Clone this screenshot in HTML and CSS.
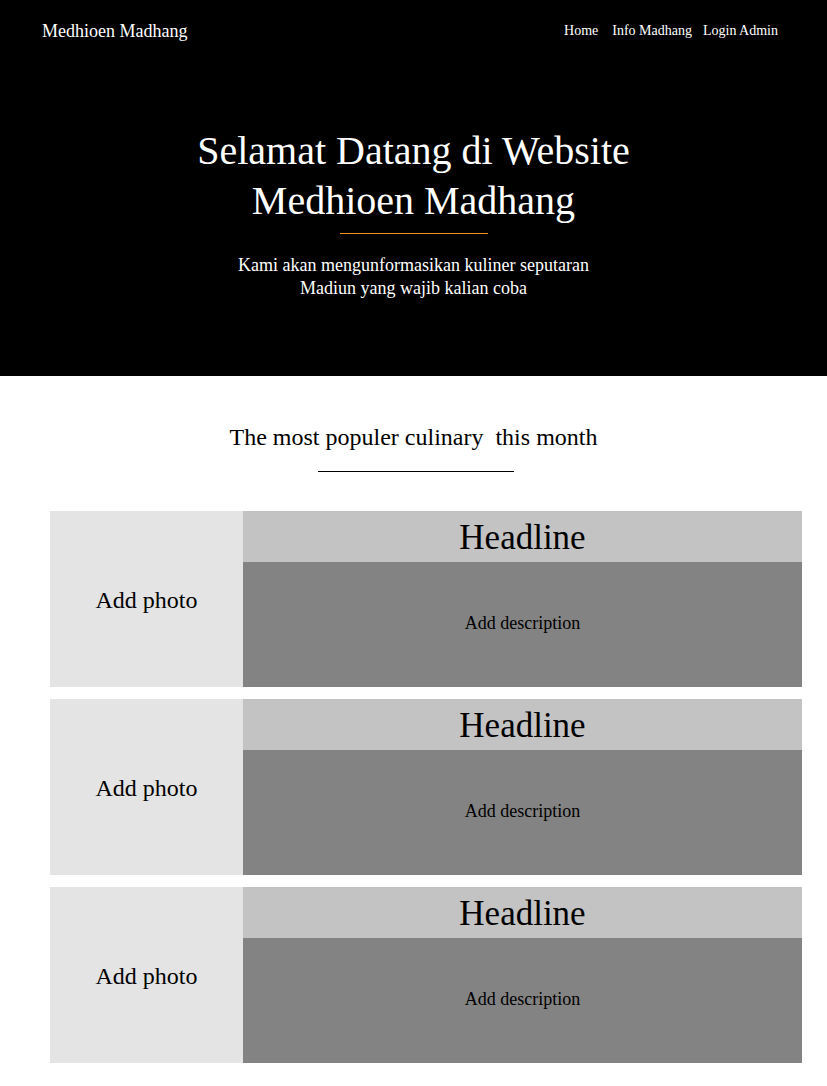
FILE: index.html
```html
<!DOCTYPE html>
<html lang="id">
<head>
  <meta charset="UTF-8">
  <meta name="viewport" content="width=device-width, initial-scale=1.0">
  <title>Medhioen Madhang</title>
  <link rel="stylesheet" href="styles.css">
</head>
<body>
  <header class="hero">
    <nav class="navbar">
      <a class="brand" href="/">Medhioen Madhang</a>
      <ul class="nav-links">
        <li class="nav-home"><a href="/">Home</a></li>
        <li><a href="/info">Info Madhang</a></li>
        <li><a href="/admin">Login Admin</a></li>
      </ul>
    </nav>

    <div class="hero-text">
      <h1>Selamat Datang di Website Medhioen Madhang</h1>
      <hr class="hero-line">
      <p>Kami akan mengunformasikan kuliner seputaran Madiun yang wajib kalian coba</p>
    </div>
  </header>

  <main>
    <h2 class="section-title">The most populer culinary &nbsp;this month</h2>
    <hr class="section-line">

    <div class="cards">
      <div class="card">
        <div class="card-photo">Add photo</div>
        <div class="card-body">
          <h3 class="card-headline">Headline</h3>
          <div class="card-desc">Add description</div>
        </div>
      </div>

      <div class="card">
        <div class="card-photo">Add photo</div>
        <div class="card-body">
          <h3 class="card-headline">Headline</h3>
          <div class="card-desc">Add description</div>
        </div>
      </div>

      <div class="card">
        <div class="card-photo">Add photo</div>
        <div class="card-body">
          <h3 class="card-headline">Headline</h3>
          <div class="card-desc">Add description</div>
        </div>
      </div>
    </div>
  </main>
</body>
</html>
```

FILE: styles.css
```css
body {
  font-family: "Liberation Serif", "Times New Roman", serif;
  margin: 0;
  padding: 0;
  color: #000;
  background-color: #fff;
}

/* header + hero */
.hero {
  background-color: #000;
  color: #fff;
  height: 376px;
}

.navbar {
  display: flex;
  justify-content: space-between;
  align-items: center;
  height: 62px;
  padding: 0 49px 0 42px;
}

.brand {
  color: #fff;
  text-decoration: none;
  font-size: 18px;
}

.nav-links {
  list-style-type: none;
  display: flex;
  gap: 11px;
  margin: 0;
  padding: 0;
  font-size: 14px;
}

.nav-links .nav-home {
  margin-right: 3px;
}

.nav-links a {
  color: #fff;
  text-decoration: none;
}

.hero-text {
  text-align: center;
  padding-top: 64px;
}

.hero-text h1 {
  font-size: 40px;
  font-weight: normal;
  line-height: 50px;
  max-width: 460px;
  margin: 0 auto;
}

.hero-line {
  width: 148px;
  border: none;
  border-top: 1px solid #f39218;
  margin: 7px auto 20px;
}

.hero-text p {
  font-size: 18px;
  line-height: 23px;
  max-width: 380px;
  margin: 0 auto;
}

/* content */
main {
  padding-top: 46px;
  padding-bottom: 23px;
}

.section-title {
  font-size: 24px;
  font-weight: normal;
  text-align: center;
  line-height: 30px;
  margin: 0;
}

.section-line {
  width: 196px;
  border: none;
  border-top: 1px solid #000;
  margin: 19px auto 39px;
  position: relative;
  left: 2px;
}

.cards {
  display: flex;
  flex-direction: column;
  gap: 12px;
  margin: 0 25px 0 50px;
}

.card {
  display: flex;
  height: 176px;
}

.card-photo {
  width: 193px;
  background-color: #e4e4e4;
  display: flex;
  align-items: center;
  justify-content: center;
  font-size: 24px;
  padding-top: 2px;
}

.card-body {
  flex: 1;
  display: flex;
  flex-direction: column;
}

.card-headline {
  background-color: #c3c3c3;
  height: 51px;
  margin: 0;
  padding-top: 3px;
  box-sizing: border-box;
  font-size: 35px;
  font-weight: normal;
  line-height: 48px;
  text-align: center;
}

.card-desc {
  flex: 1;
  background-color: #838383;
  display: flex;
  align-items: center;
  justify-content: center;
  font-size: 18px;
  padding-bottom: 3px;
}
```
